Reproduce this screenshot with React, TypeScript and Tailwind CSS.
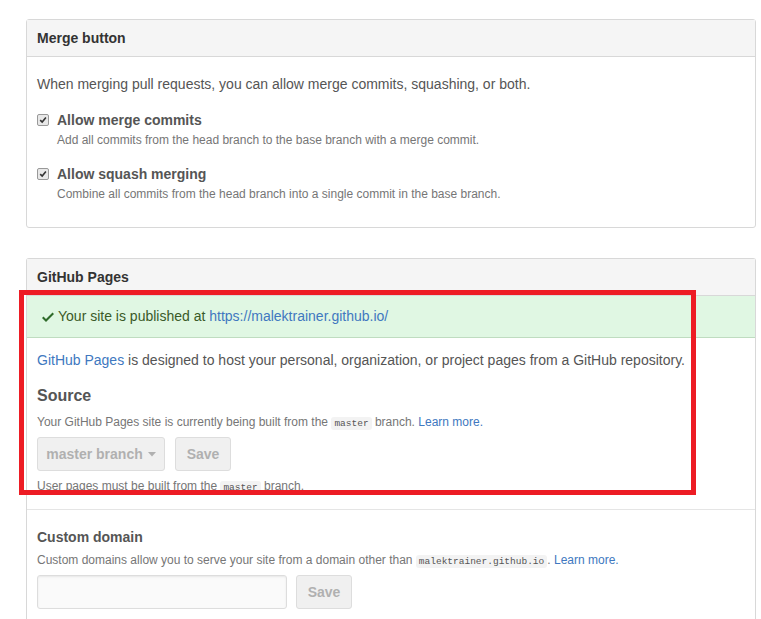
const font = { fontFamily: '"Liberation Sans", Arial, sans-serif' };

const Code = ({ children }: { children: React.ReactNode }) => (
  <code className="rounded-[3px] bg-[#f3f3f3] px-[3px] py-[1px] font-['Liberation_Mono',monospace] text-[9.5px] text-[#555]">
    {children}
  </code>
);

const CheckBox = () => (
  <span className="mt-[4px] flex h-[12px] w-[12px] shrink-0 items-center justify-center rounded-[2px] border border-[#999] bg-[#e8e8e8]">
    <svg width="8" height="8" viewBox="0 0 10 10">
      <path d="M1.5 5.2 L4 7.6 L8.6 2" fill="none" stroke="#333" strokeWidth="2" />
    </svg>
  </span>
);

const Option = ({ title, note }: { title: string; note: string }) => (
  <div className="flex gap-[8px]">
    <CheckBox />
    <div>
      <div className="text-[14px] font-bold leading-[20px] text-[#555]">{title}</div>
      <div className="text-[12px] leading-[20px] text-[#767676]">{note}</div>
    </div>
  </div>
);

const DisabledButton = ({ children, className }: { children: React.ReactNode; className?: string }) => (
  <div
    className={
      "flex h-[34px] items-center justify-center rounded-[3px] border border-[#ddd] bg-[#f0f0f0] text-[14px] font-bold text-[#b0b0b0] " +
      (className ?? "")
    }
  >
    {children}
  </div>
);

export default function App() {
  return (
    <div className="relative h-[619px] overflow-hidden bg-white px-[26px] pt-[19px] text-[#333]" style={font}>
      {/* Merge button */}
      <div className="w-[730px] rounded-[3px] border border-[#d8d8d8]">
        <div className="flex h-[37px] items-center border-b border-[#d8d8d8] bg-[#f5f5f5] px-[10px] text-[14px] font-bold text-[#333]">
          Merge button
        </div>
        <div className="px-[10px] pb-[23px] pt-[17px]">
          <p className="text-[14px] leading-[20px] text-[#555]">
            When merging pull requests, you can allow merge commits, squashing, or both.
          </p>
          <div className="mt-[16px] flex flex-col gap-[14px]">
            <Option
              title="Allow merge commits"
              note="Add all commits from the head branch to the base branch with a merge commit."
            />
            <Option
              title="Allow squash merging"
              note="Combine all commits from the head branch into a single commit in the base branch."
            />
          </div>
        </div>
      </div>

      {/* GitHub Pages */}
      <div className="mt-[30px] w-[730px] rounded-t-[3px] border border-b-0 border-[#d8d8d8]">
        <div className="flex h-[37px] items-center border-b border-[#d8d8d8] bg-[#f5f5f5] px-[10px] text-[14px] font-bold text-[#333]">
          GitHub Pages
        </div>
        <div className="flex h-[42px] items-center gap-[4px] border-b border-[#bfdcc0] bg-[#e0f7e3] px-[15px] text-[14px] text-[#3a5a28]">
          <svg width="12" height="16" viewBox="0 0 12 16">
            <path d="M12 5l-8 8-4-4 1.5-1.5L4 10l6.5-6.5L12 5z" fill="#2f6b2a" />
          </svg>
          <span>
            Your site is published at{" "}
            <span className="text-[#4078c0]">https://malektrainer.github.io/</span>
          </span>
        </div>
        <div className="border-b border-[#e5e5e5] px-[10px] pb-[13px] pt-[12px]">
          <p className="text-[14px] leading-[20px] text-[#555]">
            <span className="text-[#4078c0]">GitHub Pages</span> is designed to host your personal, organization, or
            project pages from a GitHub repository.
          </p>
          <h3 className="mt-[16px] text-[16px] font-bold leading-[20px] text-[#555]">Source</h3>
          <p className="mt-[8px] text-[12px] leading-[17px] text-[#767676]">
            Your GitHub Pages site is currently being built from the <Code>master</Code> branch.{" "}
            <span className="text-[#4078c0]">Learn more.</span>
          </p>
          <div className="mt-[5px] flex gap-[10px]">
            <DisabledButton className="w-[128px] gap-[5px]">
              master branch
              <svg width="8" height="5" viewBox="0 0 8 5">
                <path d="M0 0 H8 L4 4.5 Z" fill="#b0b0b0" />
              </svg>
            </DisabledButton>
            <DisabledButton className="w-[56px]">Save</DisabledButton>
          </div>
          <p className="mt-[7px] text-[12px] leading-[17px] text-[#767676]">
            User pages must be built from the <Code>master</Code> branch.
          </p>
        </div>
        <div className="px-[10px] pb-[30px] pt-[17px]">
          <h4 className="text-[14px] font-bold leading-[20px] text-[#555]">Custom domain</h4>
          <p className="mt-[5px] text-[12px] leading-[17px] text-[#767676]">
            Custom domains allow you to serve your site from a domain other than <Code>malektrainer.github.io</Code>.{" "}
            <span className="text-[#4078c0]">Learn more.</span>
          </p>
          <div className="mt-[5px] flex gap-[9px]">
            <div className="h-[34px] w-[250px] rounded-[3px] border border-[#ddd] bg-[#fafafa] shadow-[inset_0_1px_2px_rgba(0,0,0,0.075)]" />
            <DisabledButton className="w-[56px]">Save</DisabledButton>
          </div>
        </div>
      </div>

      {/* annotation */}
      <div className="pointer-events-none absolute left-[19px] top-[290px] h-[205px] w-[677px] border-[5px] border-[#ed1c24]" />
    </div>
  );
}
